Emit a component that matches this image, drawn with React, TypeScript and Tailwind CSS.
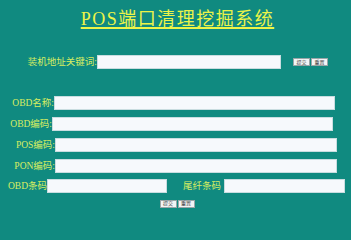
const labelFont = { fontFamily: '"Liberation Serif", "Noto Sans CJK SC", serif' };

const Field = ({ className }: { className: string }) => (
  <input
    type="text"
    className={`h-[14px] shrink-0 bg-[#f6f9fc] border border-[#c9dde0] outline-none ${className}`}
  />
);

const Label = ({ className, children }: { className: string; children: string }) => (
  <span className={`shrink-0 flex justify-end whitespace-nowrap ${className}`}>{children}</span>
);

const Buttons = () => (
  <div className="flex items-center gap-[1px]">
    <button className="h-[8px] w-[17px] bg-[#f2f4f5] border border-[#9aa6a8] text-[5px] leading-none text-[#444]">
      提交
    </button>
    <button className="h-[8px] w-[17px] bg-[#f2f4f5] border border-[#9aa6a8] text-[5px] leading-none text-[#444]">
      重置
    </button>
  </div>
);

export default function App() {
  return (
    <div
      className="w-screen min-w-[351px] h-screen min-h-[210px] bg-[#108a80] text-[#d8ee62] overflow-hidden"
      style={labelFont}
    >
      <div className="pt-[8px] flex justify-center">
        <h1 className="text-[18px] leading-[22px] tracking-[1.5px] text-[#ecf448] underline decoration-[1.5px] underline-offset-[2px] pl-[4px]">
          POS端口清理挖掘系统
        </h1>
      </div>

      <div className="mt-[25px] flex items-center text-[9.5px]">
        <Label className="w-[97px]">装机地址关键词:</Label>
        <Field className="w-[184px]" />
        <div className="ml-[12px]">
          <Buttons />
        </div>
      </div>

      <div className="mt-[27px] flex flex-col gap-[6.5px] text-[9.5px]">
        <div className="flex items-center">
          <Label className="w-[54px]">OBD名称:</Label>
          <Field className="w-[281px]" />
        </div>
        <div className="flex items-center">
          <Label className="w-[52px]">OBD编码:</Label>
          <Field className="w-[281px]" />
        </div>
        <div className="flex items-center">
          <Label className="w-[55px]">POS编码:</Label>
          <Field className="w-[282px]" />
        </div>
        <div className="flex items-center">
          <Label className="w-[55px]">PON编码:</Label>
          <Field className="w-[282px]" />
        </div>
        <div className="flex items-center">
          <Label className="w-[47px]">OBD条码</Label>
          <Field className="w-[120px]" />
          <Label className="w-[57px] pr-[3px]">尾纤条码</Label>
          <Field className="w-[121px]" />
        </div>
      </div>

      <div className="mt-[6px] flex justify-center pl-[3px]">
        <Buttons />
      </div>
    </div>
  );
}
